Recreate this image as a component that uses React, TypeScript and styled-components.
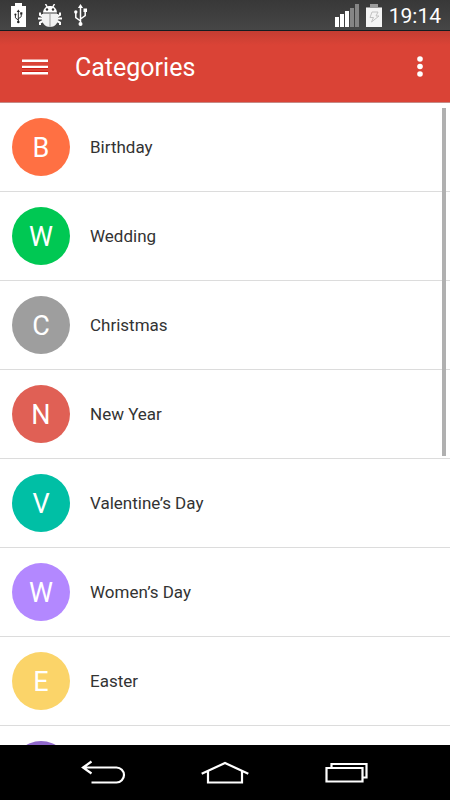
import React from "react";
import styled, { createGlobalStyle } from "styled-components";

const GlobalStyle = createGlobalStyle`
  *, *::before, *::after { box-sizing: border-box; }
  body { margin: 0; font-family: Roboto, "Noto Sans", sans-serif; background: #fff; }
  button { border: 0; padding: 0; background: none; color: inherit; font: inherit; cursor: pointer; }
  svg { display: block; }
`;

const Screen = styled.div`
  display: flex;
  flex-direction: column;
  height: 100vh;
  overflow: hidden;
`;

const StatusBar = styled.div`
  flex: none;
  display: flex;
  align-items: center;
  justify-content: space-between;
  height: 31px;
  padding: 0 9px 0 11px;
  color: #fff;
  background: linear-gradient(#383838, #464646);
  border-bottom: 1px solid #101c20;
`;

const StatusGroup = styled.div<{ $gap: number }>`
  display: flex;
  align-items: center;
  gap: ${(p) => p.$gap}px;
`;

const Clock = styled.time`
  font-size: 21px;
  line-height: 24px;
  padding-top: 2px;
`;

const AppBar = styled.header`
  flex: none;
  display: flex;
  align-items: center;
  height: 72px;
  padding: 0 12px;
  color: #fff;
  background: linear-gradient(#c33d32, #da4336 14px);
  border-bottom: 1px solid #c58a86;
`;

const IconButton = styled.button`
  flex: none;
  display: grid;
  place-items: center;
  width: 46px;
  height: 48px;
`;

const MenuButton = styled(IconButton)`
  margin-right: 17px;
`;

const MoreButton = styled(IconButton)`
  width: 36px;
`;

const Title = styled.h1`
  flex: 1;
  margin: 0;
  padding-top: 2px;
  font-size: 25px;
  line-height: 32px;
  font-weight: 400;
`;

const Content = styled.main`
  position: relative;
  flex: 1;
  min-height: 0;
  overflow: hidden;
`;

const List = styled.ul`
  margin: 0;
  padding: 0;
  list-style: none;
`;

const Row = styled.li`
  border-bottom: 1px solid #dcdcdc;
`;

const RowButton = styled.button`
  display: flex;
  align-items: center;
  gap: 20px;
  width: 100%;
  height: 88px;
  padding: 0 12px;
  text-align: left;
  font-size: 17px;
  line-height: 24px;
  color: #333;
`;

const Avatar = styled.span<{ $color: string }>`
  flex: none;
  display: grid;
  place-items: center;
  width: 58px;
  height: 58px;
  padding-top: 2px;
  border-radius: 50%;
  background: ${(p) => p.$color};
  color: #fff;
  font-size: 27px;
  line-height: 32px;
`;

const ScrollThumb = styled.div`
  position: absolute;
  top: 5px;
  right: 4px;
  width: 4px;
  height: 54.2%;
  background: #b0b0b0;
`;

const NavBar = styled.nav`
  flex: none;
  display: grid;
  grid-template-columns: repeat(3, 122px);
  justify-content: center;
  height: 55px;
  background: #000;
  color: #fff;
`;

const NavButton = styled.button`
  display: grid;
  place-items: center;
`;

const categories = [
  { name: "Birthday", color: "#ff7043" },
  { name: "Wedding", color: "#00c853" },
  { name: "Christmas", color: "#9e9e9e" },
  { name: "New Year", color: "#e06055" },
  { name: "Valentine’s Day", color: "#00bfa5" },
  { name: "Women’s Day", color: "#b388ff" },
  { name: "Easter", color: "#fbd469" },
  { name: "", color: "#9068cb" },
];

const UsbMark = () => (
  <g fill="none" stroke="currentColor" strokeWidth="1.5">
    <path d="M6.500 3v17M6.500 17L1.800 13.500V8M6.500 15l4.700-3.500V7" />
    <path d="M6.500 0l2.600 4H3.900z" fill="currentColor" stroke="none" />
    <circle cx="1.800" cy="8" r="1.700" fill="currentColor" stroke="none" />
    <path d="M9.500 4.500H13V8H9.500z" fill="currentColor" stroke="none" />
    <circle cx="6.500" cy="20" r="2" fill="currentColor" stroke="none" />
  </g>
);

const ChargingIcon = () => (
  <svg width="15" height="24" viewBox="0 0 15 24" aria-hidden="true">
    <path d="M4 0h7v3h4v21H0V3h4z" fill="#fff" />
    <g transform="translate(3.300 6.500) scale(.62)" color="#222">
      <UsbMark />
    </g>
  </svg>
);

const BugIcon = () => (
  <svg width="24" height="23" viewBox="0 0 24 23" aria-hidden="true">
    <g fill="none" stroke="#fff" strokeWidth="2">
      <path d="M7.500 0l2 3.500M16.500 0l-2 3.500" strokeWidth="1.500" />
      <path d="M5 12.500L2 11V8.500M5 14.500H0M5 17l-3 1.500V21M19 12.500l3-1.500V8.500M19 14.500h5M19 17l3 1.500V21" />
    </g>
    <path d="M5 8.500C5.500 4 8.500 2 12 2s6.500 2 7 6.500z" fill="#fff" />
    <path d="M4 10h16v5c0 4.500-3.500 8-8 8s-8-3.500-8-8z" fill="#f2f2f2" />
    <path d="M12 10v13M5 9.500h14" fill="none" stroke="#999" />
    <circle cx="9" cy="5.500" r="1.200" fill="#333" />
    <circle cx="15" cy="5.500" r="1.200" fill="#333" />
  </svg>
);

const UsbIcon = () => (
  <svg width="13" height="22" viewBox="0 0 13 22" aria-hidden="true">
    <UsbMark />
  </svg>
);

const SignalIcon = () => (
  <svg width="24" height="23" viewBox="0 0 24 23" aria-hidden="true">
    <path d="M0 13h4v10H0zM5 10h4v13H5zM10 7h4v16h-4z" fill="#fff" />
    <path d="M15 4h4v19h-4zM20 0h4v23h-4z" fill="#858585" />
  </svg>
);

const BatteryIcon = () => (
  <svg width="16" height="23" viewBox="0 0 16 23" aria-hidden="true">
    <path d="M4 0h8v3h4v20H0V3h4z" fill="#f4f4f4" />
    <path d="M4 0h8v3h4v1H0V3h4z" fill="#9c9c9c" />
    <path d="M6 8h6l-2 4h3l-7.500 6 2-4.500H4z" fill="none" stroke="#c2c2c2" />
  </svg>
);

const MenuIcon = () => (
  <svg width="26" height="16" viewBox="0 0 26 16" aria-hidden="true">
    <path d="M0 9h26v1H0zM0 12h26v1H0z" fill="#cf2018" />
    <path d="M0 .500h26v2.400H0zM0 6.700h26v2.400H0zM0 13h26v2.400H0z" fill="#fff" />
  </svg>
);

const MoreIcon = () => (
  <svg width="6" height="22" viewBox="0 0 6 22" fill="#fff" aria-hidden="true">
    <circle cx="3" cy="3" r="2.800" />
    <circle cx="3" cy="10.500" r="2.800" />
    <circle cx="3" cy="18" r="2.800" />
  </svg>
);

const NavIcon = ({ d }: { d: string }) => (
  <svg width="48" height="28" viewBox="0 0 48 28" fill="none" stroke="currentColor" strokeWidth="2.200" aria-hidden="true">
    <path d={d} />
  </svg>
);

const navItems = [
  { label: "Back", d: "M12.500 2.500L4 8.500l8.500 6M4.500 8.500h33a7.500 7.500 0 0 1 0 15H12.500" },
  { label: "Home", d: "M.700 14.800L24 4l23.300 10.800M7 12.500v11h34v-11" },
  { label: "Recent apps", d: "M3.500 9h36v13.500h-36zM8.500 9V5h35v13.500h-4" },
];

export default function App() {
  return (
    <Screen>
      <GlobalStyle />
      <StatusBar>
        <StatusGroup $gap={12}>
          <ChargingIcon />
          <BugIcon />
          <UsbIcon />
        </StatusGroup>
        <StatusGroup $gap={7}>
          <SignalIcon />
          <BatteryIcon />
          <Clock>19:14</Clock>
        </StatusGroup>
      </StatusBar>
      <AppBar>
        <MenuButton type="button" aria-label="Open menu">
          <MenuIcon />
        </MenuButton>
        <Title>Categories</Title>
        <MoreButton type="button" aria-label="More options">
          <MoreIcon />
        </MoreButton>
      </AppBar>
      <Content>
        <List>
          {categories.map(({ name, color }) => (
            <Row key={color}>
              <RowButton type="button">
                <Avatar $color={color} aria-hidden="true">
                  {name.charAt(0)}
                </Avatar>
                {name}
              </RowButton>
            </Row>
          ))}
        </List>
        <ScrollThumb />
      </Content>
      <NavBar>
        {navItems.map(({ label, d }) => (
          <NavButton key={label} type="button" aria-label={label}>
            <NavIcon d={d} />
          </NavButton>
        ))}
      </NavBar>
    </Screen>
  );
}
